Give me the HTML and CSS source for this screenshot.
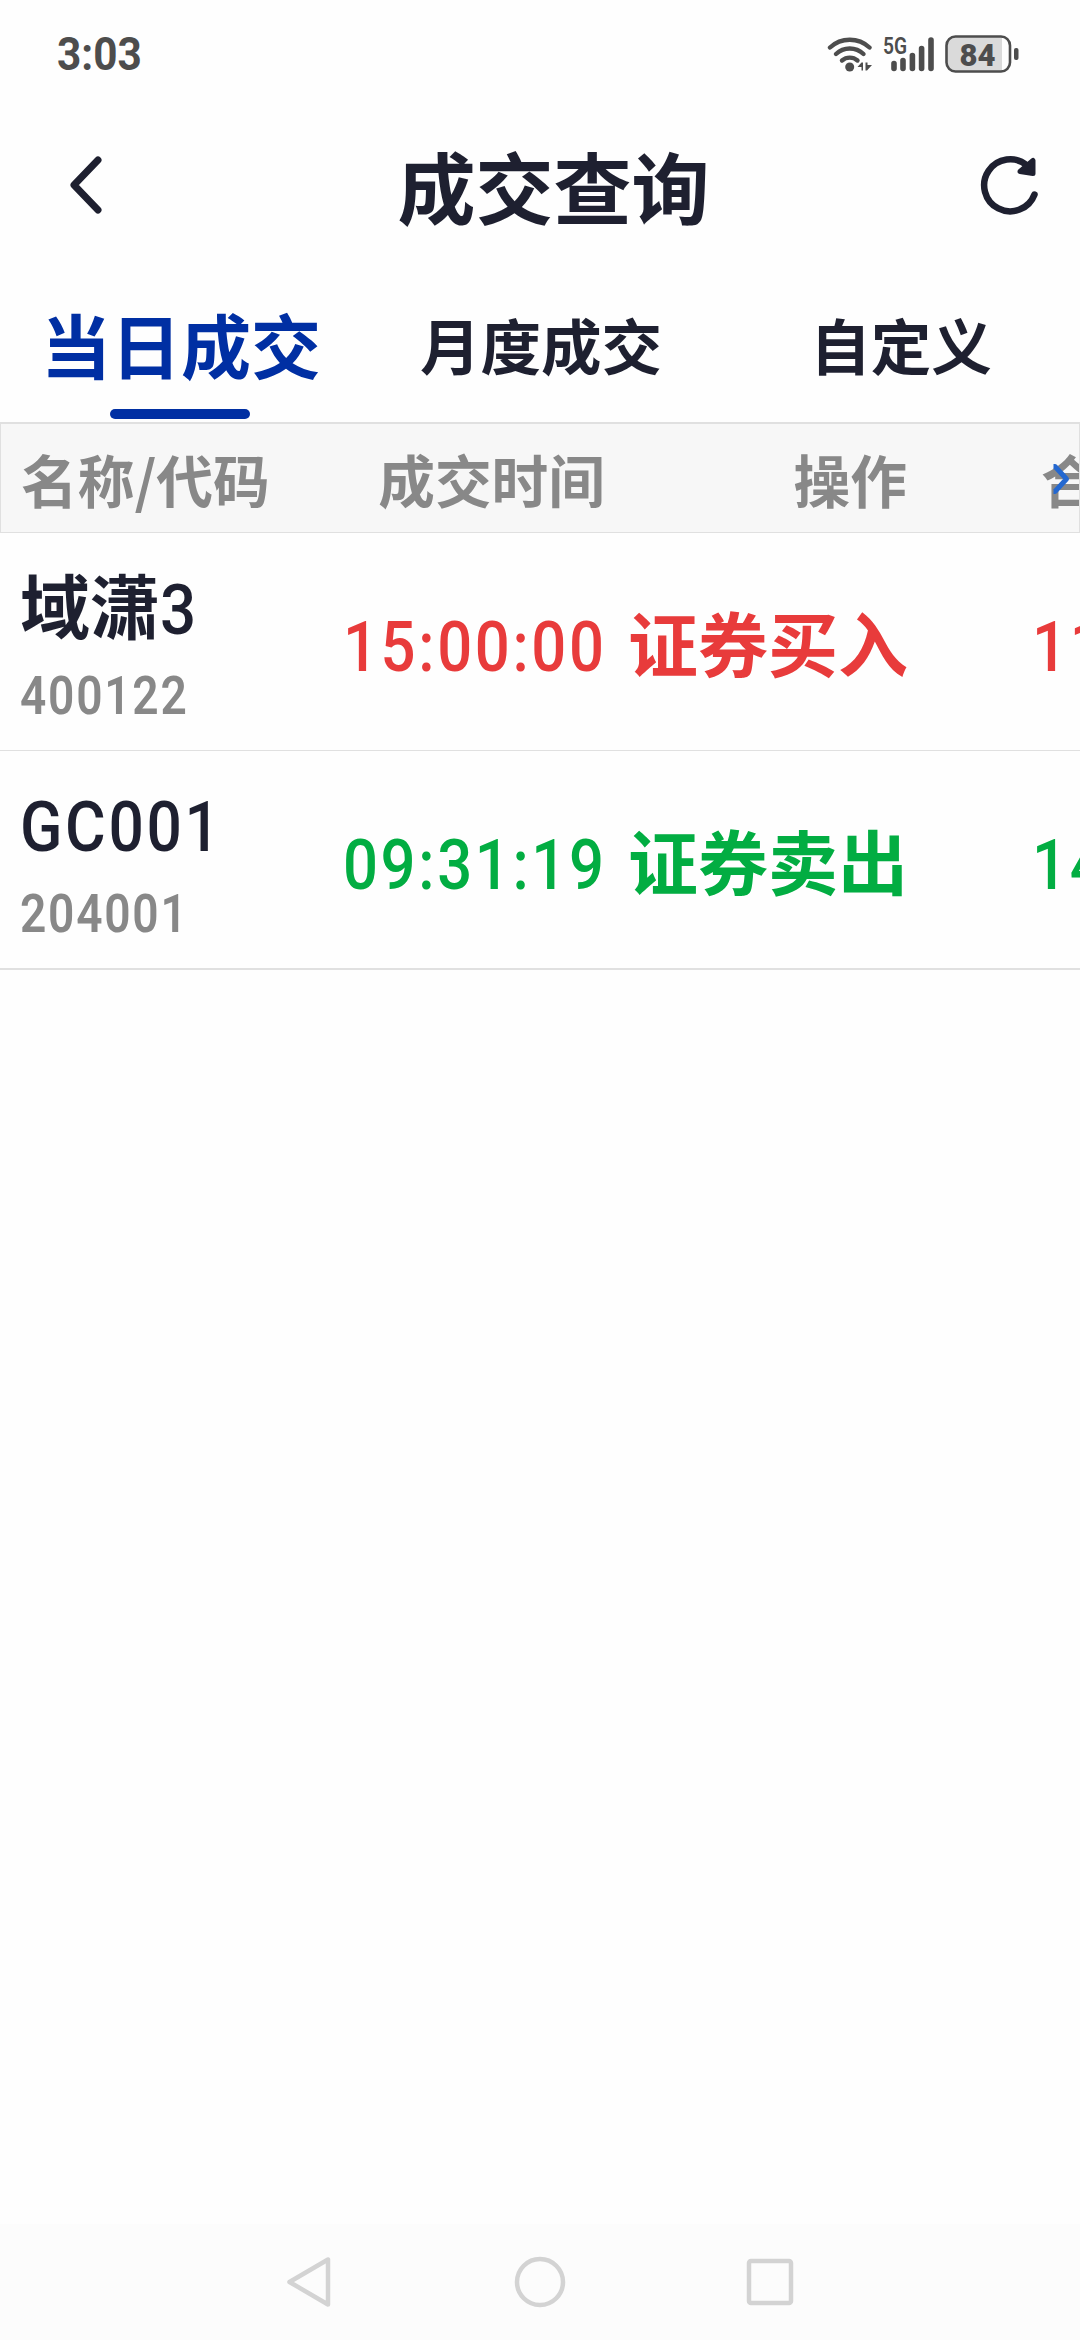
FILE: index.html
```html
<!DOCTYPE html>
<html lang="zh-CN">
<head>
    <meta charset="UTF-8">
    <meta name="viewport" content="width=device-width, initial-scale=1.0">
    <title>成交查询</title>
    <link rel="stylesheet" href="styles.css">
</head>
<body>
    <!-- Status Bar -->
    <div class="status-bar">
        <div class="status-time">3:03</div>
        <div class="status-icons">
            <svg class="icon-wifi" width="46" height="38" viewBox="0 0 46 38" fill="none" stroke="#4d4d4d" stroke-width="4.4" stroke-linecap="round">
                <path d="M3 12.500a29 29 0 0 1 39.500 0"/>
                <path d="M9 19a20 20 0 0 1 27.500 0"/>
                <path d="M15 25.500a12 12 0 0 1 15.500 0"/>
                <circle cx="22.700" cy="32" r="4.500" fill="#4d4d4d" stroke="none"/>
                <path d="M30.500 32l4-4.500h1.500v8h-1.500v-3.500zM38.500 27.500h2v2.500l4.500 0-5 5.500h-1.500z" fill="#4d4d4d" stroke="none"/>
            </svg>
            <svg class="icon-signal" width="52" height="50" viewBox="0 -6 52 50">
                <text x="0" y="18.500" class="signal-label" textLength="24" lengthAdjust="spacingAndGlyphs">5G</text>
                <g stroke="#4d4d4d" stroke-width="5.600" stroke-linecap="round">
                    <path d="M11 28.500v5M20 25.500v8M29.400 20.500v13M38.600 13.500v20M48 5v28.500"/>
                </g>
            </svg>
            <svg class="icon-battery" width="74" height="38" viewBox="0 0 74 38">
                <path d="M10 2h47v34H10a8 8 0 0 1-8-8V10a8 8 0 0 1 8-8z" fill="#dadada"/>
                <rect x="1.500" y="1.500" width="63.500" height="35" rx="9" fill="none" stroke="#4d4d4d" stroke-width="2.600"/>
                <rect x="69" y="13" width="4.500" height="12" rx="2" fill="#4d4d4d"/>
                <text x="14.500" y="30.500" class="battery-label" textLength="36" lengthAdjust="spacingAndGlyphs">84</text>
            </svg>
        </div>
    </div>

    <!-- Header -->
    <div class="header">
        <svg class="back" width="36" height="62" viewBox="0 0 36 62" fill="none" stroke="#1e2030" stroke-width="7" stroke-linecap="round" stroke-linejoin="round">
            <path d="M31 6L7 31l24 25"/>
        </svg>
        <h1>成交查询</h1>
        <svg class="refresh" width="60" height="62" viewBox="0 0 60 62">
            <path d="M54.500 40.500A26 26 0 1 1 47 11.500" fill="none" stroke="#1e2030" stroke-width="6.500" stroke-linecap="round"/>
            <path d="M40 17.500l13-11v13z" fill="#1e2030" stroke="#1e2030" stroke-width="5" stroke-linejoin="round"/>
        </svg>
    </div>

    <!-- Tabs -->
    <div class="tabs">
        <div class="tab active">当日成交</div>
        <div class="tab">月度成交</div>
        <div class="tab">自定义</div>
    </div>

    <!-- Deal Table -->
    <div class="table">
        <div class="table-head">
            <div class="cell-name">名称/代码</div>
            <div class="cell">成交时间</div>
            <div class="cell">操作</div>
            <div class="cell-next">合</div>
            <svg class="more" width="20" height="32" viewBox="0 0 20 32" fill="none" stroke="#2468d0" stroke-width="5">
                <path d="M2.500 3.500h1.500L15.500 16 4 28.500H2.500" stroke-linejoin="round"/>
            </svg>
        </div>

        <div class="row buy">
            <div class="cell-name">
                <div class="name">域潇<span class="num">3</span></div>
                <div class="code"><span class="num">400122</span></div>
            </div>
            <div class="cell time"><span class="num">15:00:00</span></div>
            <div class="cell action">证券买入</div>
            <div class="cell-next time"><span class="num">11</span></div>
        </div>

        <div class="row sell">
            <div class="cell-name">
                <div class="name latin"><span class="num">GC001</span></div>
                <div class="code"><span class="num">204001</span></div>
            </div>
            <div class="cell time"><span class="num">09:31:19</span></div>
            <div class="cell action">证券卖出</div>
            <div class="cell-next time"><span class="num">14</span></div>
        </div>
    </div>

    <!-- System Navigation -->
    <div class="nav-bar">
        <svg width="56" height="56" viewBox="0 0 56 56"><path d="M46 5.500v45L7.500 28z"/></svg>
        <svg width="56" height="56" viewBox="0 0 56 56"><circle cx="28" cy="28" r="23"/></svg>
        <svg width="56" height="56" viewBox="0 0 56 56"><rect x="7" y="7" width="42" height="42" rx="2"/></svg>
    </div>
</body>
</html>
```
FILE: styles.css
```css
* {
    margin: 0;
    padding: 0;
    box-sizing: border-box;
}

:root {
    --text-primary: #1e2030;
    --text-muted: #888888;
    --status-color: #4d4d4d;
    --active-color: #002fa3;
    --buy-color: #e83b3b;
    --sell-color: #02ad42;
    --border-color: #e0e0e0;
}

body {
    height: 2340px;
    display: flex;
    flex-direction: column;
    overflow: hidden;
    background-color: #fefefe;
    color: var(--text-primary);
    font-family: "Noto Sans CJK SC", sans-serif;
    font-weight: 700;
}

/* Status Bar */
.status-bar {
    height: 108px;
    padding: 0 61px 0 57px;
    display: flex;
    justify-content: space-between;
    align-items: center;
}

.status-time {
    font-family: Roboto, sans-serif;
    font-size: 46px;
    color: var(--status-color);
    transform: scaleX(0.92);
    transform-origin: left;
}

.status-icons {
    display: flex;
    align-items: center;
}

.icon-signal {
    margin-left: 10px;
}

.icon-battery {
    margin-left: 10px;
}

.signal-label,
.battery-label {
    font-family: Roboto, sans-serif;
    fill: #4d4d4d;
}

.signal-label {
    font-size: 24px;
    font-weight: 600;
}

.battery-label {
    font-size: 32px;
    font-weight: 900;
}

/* Header */
.header {
    height: 162px;
    padding: 0 40px 8px 67px;
    display: grid;
    grid-template-columns: 73px 1fr 73px;
    align-items: center;
}

.header h1 {
    font-size: 78px;
    line-height: 100px;
    text-align: center;
}

.refresh {
    justify-self: end;
}

/* Tabs */
.tabs {
    height: 152px;
    display: grid;
    grid-template-columns: repeat(3, 1fr);
}

.tab {
    position: relative;
    font-size: 60.5px;
    line-height: 148px;
    text-align: center;
    padding-left: 2px;
}

.tab.active {
    font-size: 70px;
    color: var(--active-color);
}

.tab.active::after {
    content: '';
    position: absolute;
    bottom: 3px;
    left: 110px;
    width: 140px;
    height: 10px;
    border-radius: 5px;
    background-color: var(--active-color);
}

/* Deal Table */
.table {
    flex: 1;
}

.table-head,
.row {
    display: grid;
    grid-template-columns: 302px 302px 302px 1fr;
    align-items: center;
    white-space: nowrap;
    overflow: hidden;
}

.table-head {
    position: relative;
    height: 111px;
    border: 1px solid var(--border-color);
    border-top-width: 2px;
    background-color: #f7f7f7;
    color: var(--text-muted);
    font-size: 56.7px;
    line-height: 78px;
}

.more {
    position: absolute;
    right: 8px;
    top: 39px;
}

.row {
    height: 218px;
    border-bottom: 1px solid var(--border-color);
    font-size: 70px;
    line-height: 100px;
}

.row:last-child {
    height: 219px;
    border-bottom-width: 2px;
}

.row.buy {
    color: var(--buy-color);
}

.row.sell {
    color: var(--sell-color);
}

.cell-name {
    padding-left: 20px;
}

.cell {
    text-align: right;
}

.cell.action {
    margin-right: -2px;
}

.cell-next {
    padding-left: 134px;
}

.cell-next.time {
    padding-left: 126px;
}

.time {
    padding-top: 5px;
}

.name {
    height: 95px;
    line-height: 94px;
    color: var(--text-primary);
}

.name.latin {
    line-height: 91px;
}

.code {
    height: 75px;
    font-size: 53px;
    line-height: 78px;
    color: var(--text-muted);
}

/* Narrow DIN-like digits */
.num {
    display: inline-block;
    font-family: Roboto, sans-serif;
    font-weight: 500;
    letter-spacing: 3px;
    transform: scaleX(0.88);
    transform-origin: left;
}

.cell .num {
    margin-right: -3px;
    transform-origin: right;
}

.name .num {
    line-height: 80px;
    transform: scaleX(0.91);
}

.name.latin .num {
    transform: scaleX(0.89);
}

.code .num {
    font-weight: 600;
    letter-spacing: 2px;
    transform: scaleX(0.87);
}

/* System Navigation */
.nav-bar {
    height: 116px;
    padding: 0 282px;
    display: flex;
    justify-content: space-between;
    align-items: center;
    background-color: #fcfcfc;
}

.nav-bar svg {
    fill: none;
    stroke: #d3d3d3;
    stroke-width: 4.5;
    stroke-linejoin: round;
}
```
